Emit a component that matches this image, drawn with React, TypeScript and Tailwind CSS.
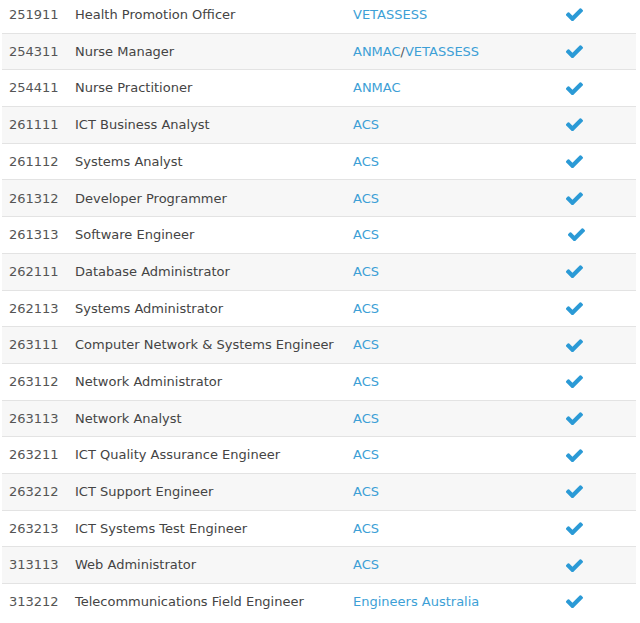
import React from "react";

const rows: [string, string, string][] = [
  ["251911", "Health Promotion Officer", "VETASSESS"],
  ["254311", "Nurse Manager", "ANMAC/VETASSESS"],
  ["254411", "Nurse Practitioner", "ANMAC"],
  ["261111", "ICT Business Analyst", "ACS"],
  ["261112", "Systems Analyst", "ACS"],
  ["261312", "Developer Programmer", "ACS"],
  ["261313", "Software Engineer", "ACS"],
  ["262111", "Database Administrator", "ACS"],
  ["262113", "Systems Administrator", "ACS"],
  ["263111", "Computer Network & Systems Engineer", "ACS"],
  ["263112", "Network Administrator", "ACS"],
  ["263113", "Network Analyst", "ACS"],
  ["263211", "ICT Quality Assurance Engineer", "ACS"],
  ["263212", "ICT Support Engineer", "ACS"],
  ["263213", "ICT Systems Test Engineer", "ACS"],
  ["313113", "Web Administrator", "ACS"],
  ["313212", "Telecommunications Field Engineer", "Engineers Australia"],
];

function Check() {
  return (
    <svg width="17" height="13" viewBox="128 380 1543 1040" className="block">
      <path
        fill="#2b9ad6"
        d="M1671 566q0 40-28 68l-724 724-136 136q-28 28-68 28t-68-28l-136-136-362-362q-28-28-28-68t28-68l136-136q28-28 68-28t68 28l294 295 656-657q28-28 68-28t68 28l136 136q28 28 28 68z"
      />
    </svg>
  );
}

function Agency({ text }: { text: string }) {
  if (text.includes("/")) {
    const [a, b] = text.split("/");
    return (
      <>
        <span className="text-[#3d9fd6]">{a}</span>
        <span className="text-[#555]">/</span>
        <span className="text-[#3d9fd6]">{b}</span>
      </>
    );
  }
  return <span className="text-[#3d9fd6]">{text}</span>;
}

export default function App() {
  return (
    <div
      className="w-[640px] h-[623px] overflow-hidden bg-white"
      style={{ fontFamily: "Verdana, 'DejaVu Sans', sans-serif" }}
    >
      <div className="mt-[-4px] ml-[2px] w-[634px]">
        {rows.map(([code, title, agency], i) => (
          <div
            key={code}
            className={`grid grid-cols-[66px_278px_220px_70px] items-center h-[36.7px] border-t border-[#e3e3e3] ${
              i % 2 === 1 ? "bg-[#f7f7f7]" : "bg-white"
            }`}
          >
            <div className="pl-[7px] text-[13px] text-[#555] whitespace-nowrap">{code}</div>
            <div className="pl-[7px] text-[13px] text-[#444] whitespace-nowrap">{title}</div>
            <div className="pl-[7px] text-[13px] whitespace-nowrap">
              <Agency text={agency} />
            </div>
            <div className={code === "261313" ? "flex pl-[2px]" : "flex"}>
              <Check />
            </div>
          </div>
        ))}
      </div>
    </div>
  );
}
